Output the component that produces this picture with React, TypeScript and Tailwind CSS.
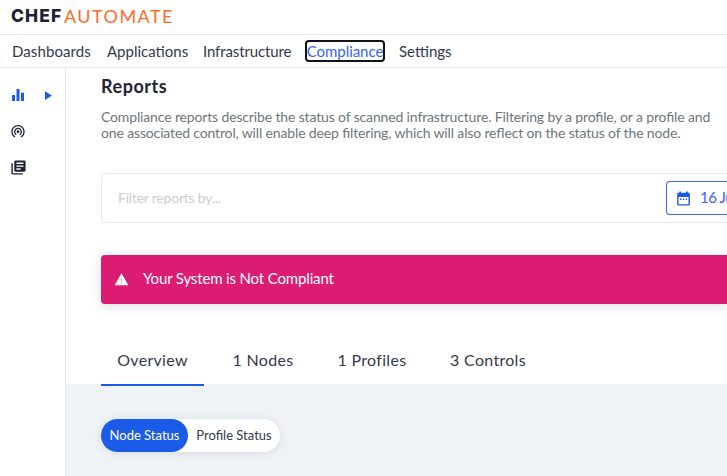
import { MdEqualizer, MdLibraryBooks, MdPlayArrow, MdWifiTethering } from "react-icons/md";

const navItems = [
  { label: "Dashboards", className: "ml-3 w-[79px] tracking-[0.1px]" },
  { label: "Applications", className: "ml-4 w-[80px]" },
  { label: "Infrastructure", className: "ml-4 w-[88px] tracking-[-0.12px]" },
  {
    label: "Compliance",
    className:
      "ml-3.5 h-[22px] w-[80px] justify-center rounded-[4px] border-2 border-[#111317] tracking-[-0.05px] text-[#3864f2]",
  },
  { label: "Settings", className: "ml-3.5 w-[60px]" },
];

const tabs = [
  { label: "Overview", className: "w-[103px] border-[#1c5ae8]" },
  { label: "1 Nodes", className: "ml-[13px] w-[92px] border-transparent" },
  { label: "1 Profiles", className: "ml-[13px] w-[100px] border-transparent" },
  { label: "3 Controls", className: "ml-[13px] w-[106px] border-transparent" },
];

function CalendarIcon() {
  return (
    <svg width="17" height="17" viewBox="0 0 24 24" fill="currentColor" className="shrink-0">
      <path
        fillRule="evenodd"
        d="M5 4h1V2h2.5v2h7V2H18v2h1a2 2 0 0 1 2 2v14a2 2 0 0 1-2 2H5a2 2 0 0 1-2-2V6a2 2 0 0 1 2-2zm0 6v10h14V10z"
      />
      <path d="M7 12h2v2H7zM11 12h2v2h-2zM15 12h2v2h-2z" />
    </svg>
  );
}

function WarningIcon() {
  return (
    <svg width="15" height="15" viewBox="0 0 24 24" fill="currentColor" className="shrink-0">
      <path d="M1 21h22L12 2z" />
      <path d="M11 10h2v4h-2zM11 16h2v2h-2z" fill="#dc1c72" fillOpacity="0.5" />
    </svg>
  );
}

function Header() {
  return (
    <header className="flex h-[35px] items-center border-b border-[#dde3e6] pl-[11px] leading-none">
      <span className="w-[53px] pb-[3px] font-['Inter',sans-serif] text-[17.5px] font-extrabold tracking-[1.1px] text-[#1f2433]">
        CHEF
      </span>
      <span className="pb-[3px] text-[18px] tracking-[1.45px] text-[#ff6a2b]">AUTOMATE</span>
    </header>
  );
}

function Nav() {
  return (
    <nav className="flex h-[33px] items-center border-b border-[#dde3e6] text-[15px] leading-none text-[#34394b]">
      {navItems.map((item) => (
        <a key={item.label} className={`flex items-center ${item.className}`}>
          {item.label}
        </a>
      ))}
    </nav>
  );
}

function Sidebar() {
  return (
    <aside className="flex w-[66px] shrink-0 flex-col border-r border-[#dde3e6] pt-[17px] text-[#1f2433]">
      <div className="flex h-[19px] items-center pl-[9px] text-[#1c5ae8]">
        <MdEqualizer size={18} />
        <MdPlayArrow size={15} className="mt-px ml-[13px]" />
      </div>
      <MdWifiTethering size={16} className="mt-[19px] ml-[10px]" />
      <MdLibraryBooks size={17} className="mt-[20px] ml-[10px]" />
    </aside>
  );
}

export default function App() {
  return (
    <div className="flex h-[476px] w-[727px] flex-col overflow-hidden bg-white font-['Lato',sans-serif] whitespace-nowrap">
      <Header />
      <Nav />
      <div className="flex min-h-0 grow">
        <Sidebar />
        <main className="flex min-w-0 grow flex-col">
          <div className="flex h-[316px] shrink-0 flex-col pl-[35px]">
            <h1 className="mt-[6px] text-[18px] leading-[24px] font-bold tracking-[0.55px] text-[#1f2433]">Reports</h1>
            <p className="mt-[11px] text-[14px] leading-[16px] tracking-[-0.145px] text-[#6d767b] [font-feature-settings:'liga']">
              Compliance reports describe the status of scanned infrastructure. Filtering by a profile, or a profile and
              <br />
              one associated control, will enable deep filtering, which will also reflect on the status of the node.
            </p>
            <div className="mt-8 flex h-[50px] shrink-0 items-center rounded-l-[4px] border border-r-0 border-[#e4eaed]">
              <span className="grow pb-0.5 pl-4 text-[14px] tracking-[-0.22px] text-[#cccccc]">
                Filter reports by...
              </span>
              <button className="flex h-[34px] w-[61px] shrink-0 items-center overflow-hidden rounded-l-[4px] border border-r-0 border-[#3864f2] pl-[8px] text-[15px] tracking-[-0.4px] text-[#3864f2]">
                <span className="text-[#1c5ae8]">
                  <CalendarIcon />
                </span>
                <span className="ml-2 pb-px">16 Ju</span>
              </button>
            </div>
            <div className="mt-8 flex h-[49px] shrink-0 items-center rounded-l-[4px] bg-[#dc1c72] pl-[13px] text-[15px] tracking-[-0.15px] text-white shadow-[0_2px_12px_rgba(60,80,100,0.2)]">
              <WarningIcon />
              <span className="ml-[14px] pb-0.5">Your System is Not Compliant</span>
            </div>
            <div className="relative mt-8 flex h-[50px] shrink-0 text-[16px] tracking-[0.3px] text-[#34394b]">
              {tabs.map((tab) => (
                <a
                  key={tab.label}
                  className={`flex h-[50px] shrink-0 items-center justify-center border-b-2 ${tab.className}`}
                >
                  {tab.label}
                </a>
              ))}
            </div>
          </div>
          <section className="grow bg-[#eff3f6] pt-[35px] pl-[35px]">
            <div className="flex h-[33px] w-[179px] rounded-full bg-white text-[13px] text-[#34394b] shadow-[0_1px_8px_rgba(60,80,100,0.15)]">
              <span className="flex w-[87px] items-center justify-center rounded-full bg-[#1c5ae8] text-white">
                Node Status
              </span>
              <span className="flex w-[92px] items-center justify-center">Profile Status</span>
            </div>
          </section>
        </main>
      </div>
    </div>
  );
}
